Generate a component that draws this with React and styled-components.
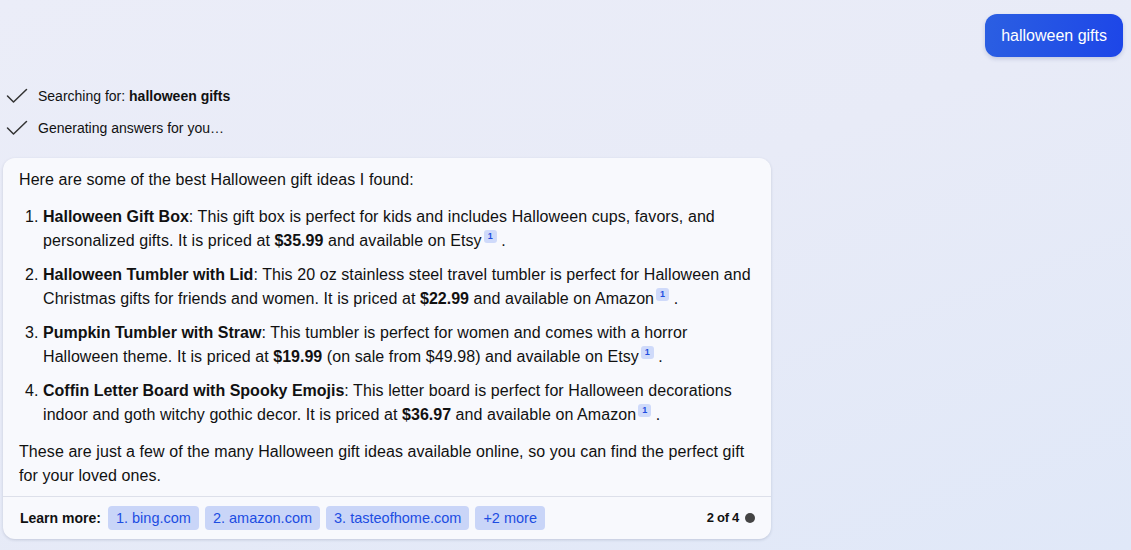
import React from "react";
import styled, { createGlobalStyle } from "styled-components";

const Global = createGlobalStyle`
  html, body { margin: 0; padding: 0; }
  body {
    width: 1131px;
    height: 550px;
    overflow: hidden;
    font-family: "Liberation Sans", Arial, Helvetica, sans-serif;
    background: linear-gradient(160deg, #ebedf8 0%, #e8ebf7 45%, #e0e8f8 100%);
    color: #111;
  }
`;

const Page = styled.div`
  display: flex;
  flex-direction: column;
  padding: 14px 8px 0 3px;
`;

const UserRow = styled.div`
  display: flex;
  justify-content: flex-end;
`;

const Bubble = styled.div`
  height: 43px;
  box-sizing: border-box;
  padding: 0 16px;
  display: flex;
  align-items: center;
  border-radius: 12px;
  background: linear-gradient(100deg, #2b5fe2 0%, #1d46e8 100%);
  color: #fff;
  font-size: 16px;
  box-shadow: 0 2px 4px rgba(30, 50, 120, 0.18);
`;

const StatusList = styled.div`
  display: flex;
  flex-direction: column;
  gap: 8px;
  margin-top: 27px;
  padding-left: 3px;
`;

const StatusRow = styled.div`
  display: flex;
  align-items: center;
  gap: 10px;
  height: 24px;
  font-size: 14px;
  color: #111;
  b { font-weight: 700; }
`;

const Card = styled.div`
  margin-top: 18px;
  width: 768px;
  box-sizing: border-box;
  background: #f8f9fd;
  border-radius: 12px;
  box-shadow: 0 1px 3px rgba(40, 50, 90, 0.18);
  font-size: 16px;
  line-height: 24px;
  letter-spacing: 0.08px;
  color: #111;
`;

const Body = styled.div`
  padding: 10px 16px 8px 16px;
`;

const Para = styled.p`
  margin: 0;
`;

const List = styled.ol`
  margin: 13px 0 13px 0;
  padding-left: 24px;
  display: flex;
  flex-direction: column;
  gap: 10px;
  b { font-weight: 700; letter-spacing: 0; }
`;

const Cite = styled.span`
  display: inline-block;
  position: relative;
  top: -7px;
  width: 13px;
  height: 13px;
  margin-left: 2px;
  border-radius: 3px;
  background: #cfdafa;
  color: #1f4ee0;
  font-size: 9px;
  font-weight: 700;
  line-height: 13px;
  text-align: center;
  vertical-align: baseline;
  letter-spacing: 0;
`;

const Footer = styled.div`
  border-top: 1px solid #dde0ea;
  display: flex;
  align-items: center;
  height: 42px;
  padding: 0 16px 0 17px;
  font-size: 14px;
  letter-spacing: 0;
`;

const LearnLabel = styled.span`
  font-weight: 700;
  margin-right: 7px;
`;

const Chips = styled.div`
  display: flex;
  gap: 6px;
`;

const Chip = styled.span`
  height: 24px;
  display: flex;
  align-items: center;
  padding: 0 8px;
  border-radius: 4px;
  background: #c9d5f8;
  color: #1d4de2;
  font-size: 14.5px;
`;

const Pager = styled.div`
  margin-left: auto;
  display: flex;
  align-items: center;
  gap: 6px;
  font-size: 13px;
  font-weight: 700;
  letter-spacing: -0.3px;
`;

const Dot = styled.span`
  width: 10px;
  height: 10px;
  border-radius: 50%;
  background: #444;
`;

const Check = () => (
  <svg width="22" height="16" viewBox="0 0 22 16">
    <path d="M1.5 8 L7.5 14 L20.5 1.5" fill="none" stroke="#333" strokeWidth="1.5" strokeLinecap="round" strokeLinejoin="round" />
  </svg>
);

const items = [
  {
    t: "Halloween Gift Box",
    a: ": This gift box is perfect for kids and includes Halloween cups, favors, and personalized gifts. It is priced at ",
    p: "$35.99",
    b: " and available on Etsy",
  },
  {
    t: "Halloween Tumbler with Lid",
    a: ": This 20 oz stainless steel travel tumbler is perfect for Halloween and Christmas gifts for friends and women. It is priced at ",
    p: "$22.99",
    b: " and available on Amazon",
  },
  {
    t: "Pumpkin Tumbler with Straw",
    a: ": This tumbler is perfect for women and comes with a horror Halloween theme. It is priced at ",
    p: "$19.99",
    b: " (on sale from $49.98) and available on Etsy",
  },
  {
    t: "Coffin Letter Board with Spooky Emojis",
    a: ": This letter board is perfect for Halloween decorations indoor and goth witchy gothic decor. It is priced at ",
    p: "$36.97",
    b: " and available on Amazon",
  },
];

export default function App() {
  return (
    <>
      <Global />
      <Page>
        <UserRow>
          <Bubble>halloween gifts</Bubble>
        </UserRow>
        <StatusList>
          <StatusRow>
            <Check />
            <span>Searching for: <b>halloween gifts</b></span>
          </StatusRow>
          <StatusRow>
            <Check />
            <span>Generating answers for you…</span>
          </StatusRow>
        </StatusList>
        <Card>
          <Body>
            <Para>Here are some of the best Halloween gift ideas I found:</Para>
            <List>
              {items.map((it) => (
                <li key={it.t}>
                  <b>{it.t}</b>
                  {it.a}
                  <b>{it.p}</b>
                  {it.b}
                  <Cite>1</Cite> .
                </li>
              ))}
            </List>
            <Para>
              These are just a few of the many Halloween gift ideas available online, so you can find the perfect gift for your loved ones.
            </Para>
          </Body>
          <Footer>
            <LearnLabel>Learn more:</LearnLabel>
            <Chips>
              <Chip>1. bing.com</Chip>
              <Chip>2. amazon.com</Chip>
              <Chip>3. tasteofhome.com</Chip>
              <Chip>+2 more</Chip>
            </Chips>
            <Pager>
              <span>2 of 4</span>
              <Dot />
            </Pager>
          </Footer>
        </Card>
      </Page>
    </>
  );
}
